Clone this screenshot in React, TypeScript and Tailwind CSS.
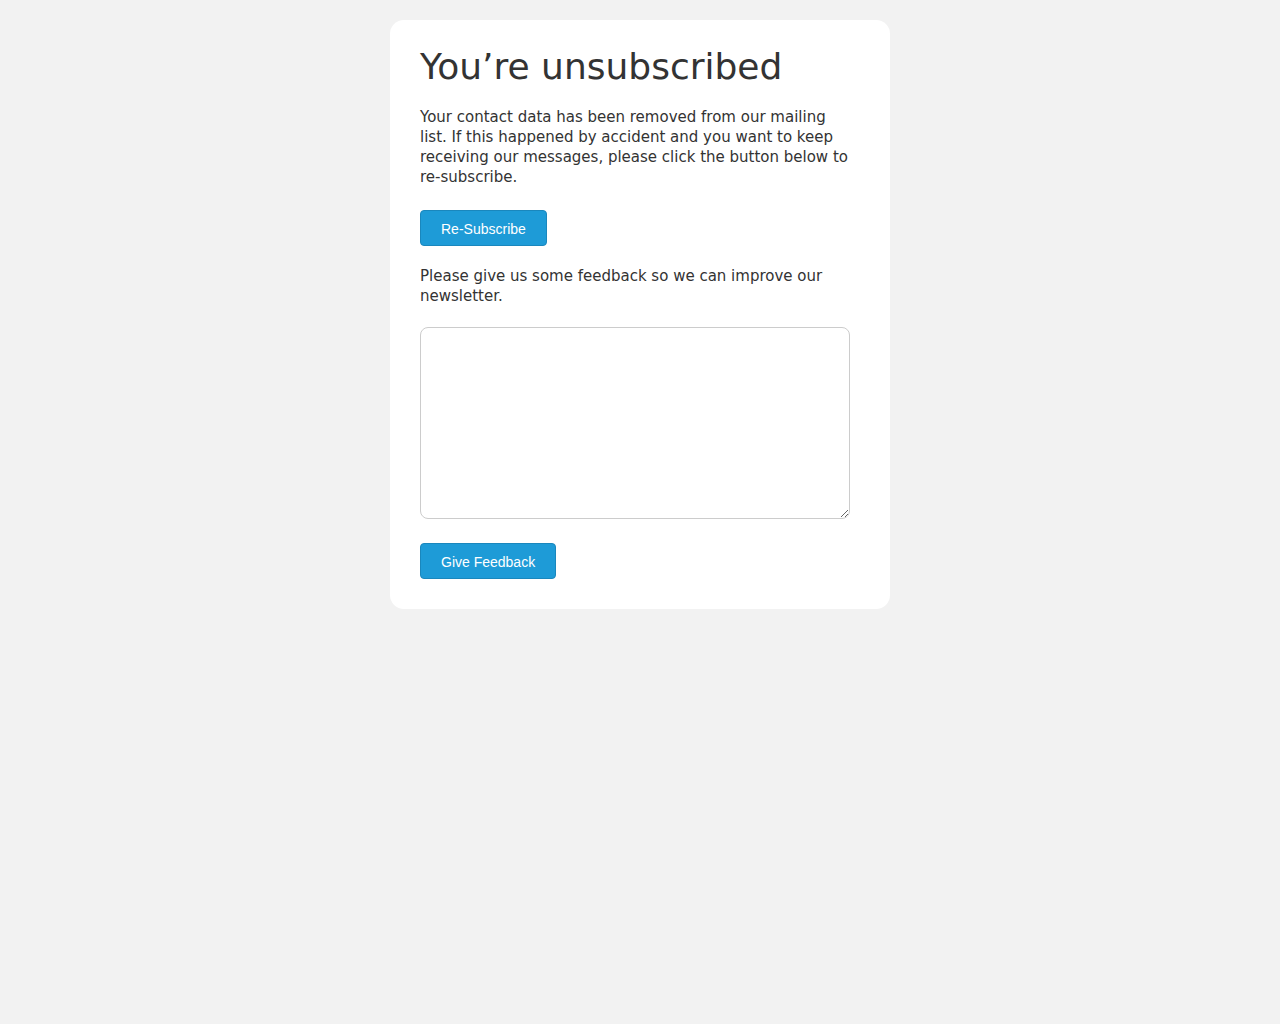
export default function App() {
  return (
    <div className="min-h-screen bg-[#f2f2f2] pt-5 font-['DejaVu_Sans',sans-serif] text-[#333333]">
      <div className="mx-auto w-[500px] rounded-[14px] bg-white px-[30px] pt-[27px] pb-[30px]">
        <h1 className="text-[36px] leading-[40px] font-normal">You’re unsubscribed</h1>
        <p className="mt-[20px] w-[430px] text-[15px] leading-[20px]">
          Your contact data has been removed from our mailing list. If this happened by accident and you want to keep
          receiving our messages, please click the button below to re-subscribe.
        </p>
        <button
          type="button"
          className="mt-[23px] h-[36px] rounded-[4px] border border-[#1a87bd] bg-[#1e9bd7] px-5 pt-[2px] font-['Liberation_Sans',Arial,sans-serif] text-[14px] text-white"
        >
          Re-Subscribe
        </button>
        <p className="mt-[20px] w-[430px] text-[15px] leading-[20px]">
          Please give us some feedback so we can improve our newsletter.
        </p>
        <textarea className="mt-[21px] block h-[192px] w-[430px] rounded-[8px] border border-[#cccccc] bg-white p-2 text-[15px] outline-none" />
        <button
          type="button"
          className="mt-[24px] h-[36px] rounded-[4px] border border-[#1a87bd] bg-[#1e9bd7] px-5 pt-[2px] font-['Liberation_Sans',Arial,sans-serif] text-[14px] text-white"
        >
          Give Feedback
        </button>
      </div>
    </div>
  );
}
